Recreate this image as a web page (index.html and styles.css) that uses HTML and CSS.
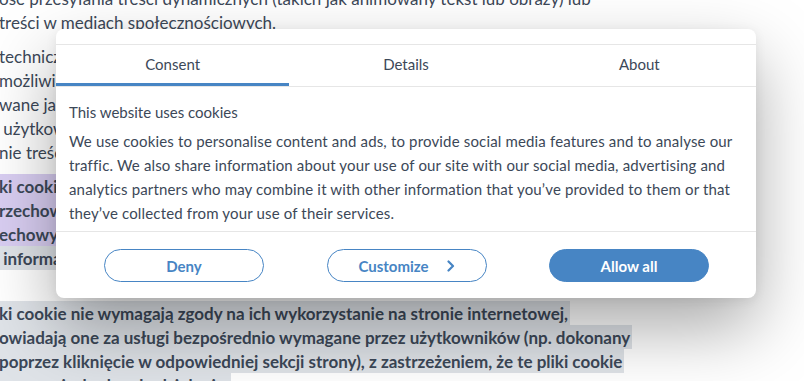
FILE: index.html
```html
<!DOCTYPE html>
<html lang="en">
<head>
<meta charset="utf-8">
<title>Cookie consent</title>
<link rel="stylesheet" href="styles.css">
</head>
<body>
<main class="article">
  <p class="para para-top"><span class="line">ose przesyłania treści dynamicznych (takich jak animowany tekst lub obrazy) lub</span><span class="line">treści w mediach społecznościowych.</span></p>
  <p class="para"><span class="line">technicznie</span><span class="line">możliwiają</span><span class="line">wane jako</span><span class="line">&nbsp;użytkownika</span><span class="line">nie treści</span></p>
  <p class="para para-mark"><span class="hl hl-purple">ki cookie&nbsp;&nbsp;</span><br><span class="hl hl-purple">rzechowy&nbsp;&nbsp;</span><br><span class="hl hl-purple">echowywa&nbsp;</span><br><span class="hl hl-gray">&nbsp;informacji&nbsp;</span></p>
  <p class="para para-bottom"><span class="hl hl-gray">ki cookie nie wymagają zgody na ich wykorzystanie na stronie internetowej,</span><br><span class="hl hl-gray">owiadają one za usługi bezpośrednio wymagane przez użytkowników (np. dokonany</span><br><span class="hl hl-gray">poprzez kliknięcie w odpowiedniej sekcji strony), z zastrzeżeniem, że te pliki cookie</span><br><span class="hl hl-gray">są one niezbędne do działania.</span></p>
</main>

<section class="dialog" role="dialog" aria-label="Cookie consent">
  <nav class="tabs">
    <button class="tab tab-active">Consent</button>
    <button class="tab">Details</button>
    <button class="tab">About</button>
  </nav>
  <div class="content">
    <h2 class="title">This website uses cookies</h2>
    <p class="text">We use cookies to personalise content and ads, to provide social media features and to analyse our traffic. We also share information about your use of our site with our social media, advertising and analytics partners who may combine it with other information that you’ve provided to them or that they’ve collected from your use of their services.</p>
  </div>
  <div class="actions">
    <button class="btn btn-outline">Deny</button>
    <button class="btn btn-outline btn-custom">Customize<svg class="chev" width="8" height="12" viewBox="0 0 8 12" aria-hidden="true"><path d="M1.5 1.5 6 6l-4.5 4.5" fill="none" stroke="#4785c4" stroke-width="2.2" stroke-linecap="round" stroke-linejoin="round"/></svg></button>
    <button class="btn btn-fill">Allow all</button>
  </div>
</section>
</body>
</html>
```

FILE: styles.css
```css
* { box-sizing: border-box; }

html, body {
  margin: 0;
  padding: 0;
  background: #ffffff;
  overflow: hidden;
  height: 381px;
}

body {
  font-family: Lato, "Noto Sans", sans-serif;
  color: #3c4858;
}

.article {
  font-size: 17px;
  line-height: 24px;
  margin: -13px 0 0 -1px;
  white-space: nowrap;
}

.para {
  margin: 0 0 10px;
}

.line {
  display: block;
}

.para-mark {
  font-weight: 700;
  margin-bottom: 31px;
}

.para-bottom {
  font-weight: 700;
}

.hl {
  padding: 2px 2px 1px 0;
}

.hl-purple { background: #d9cef2; }
.hl-gray { background: #dfe3e8; }

.dialog {
  position: absolute;
  left: 56px;
  top: 29px;
  width: 700px;
  background: #ffffff;
  border-radius: 8px;
  padding-top: 15px;
  box-shadow: 0 30px 70px rgba(0, 0, 0, 0.34), 0 2px 12px rgba(0, 0, 0, 0.07);
  overflow: hidden;
}

.tabs {
  display: grid;
  grid-template-columns: repeat(3, 1fr);
  border-top: 1px solid #e6e6e6;
  border-bottom: 1px solid #e6e6e6;
}

.tab {
  font: inherit;
  font-size: 15px;
  color: #3c4858;
  background: none;
  border: 0;
  border-bottom: 3px solid transparent;
  height: 41px;
  padding: 0;
  cursor: pointer;
}

.tab-active {
  border-bottom-color: #4785c4;
}

.content {
  padding: 13px 13px 6px;
  border-bottom: 1px solid #e6e6e6;
}

.title {
  margin: 0 0 5px;
  font-size: 15px;
  font-weight: 400;
  line-height: 24px;
}

.text {
  margin: 0;
  font-size: 15px;
  line-height: 24px;
  letter-spacing: 0.16px;
}

.actions {
  display: flex;
  justify-content: space-between;
  padding: 17px 47px 16px 48px;
}

.btn {
  font: inherit;
  font-size: 15px;
  font-weight: 700;
  width: 160px;
  height: 33px;
  border-radius: 17px;
  cursor: pointer;
  display: flex;
  align-items: center;
  justify-content: center;
}

.btn-outline {
  background: #ffffff;
  color: #4785c4;
  border: 1px solid #4785c4;
}

.btn-custom {
  gap: 18px;
  padding-left: 6px;
}

.btn-fill {
  background: #4785c4;
  color: #ffffff;
  border: 1px solid #4785c4;
}
```
